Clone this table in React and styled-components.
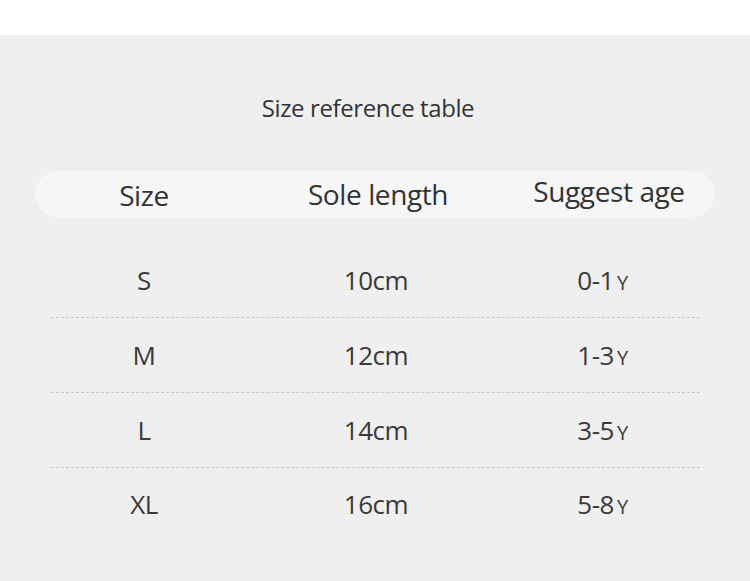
import React from "react";
import styled, { createGlobalStyle } from "styled-components";

const Global = createGlobalStyle`
  html, body { margin: 0; padding: 0; background: #ffffff; }
  body { font-family: "Open Sans", "Noto Sans", sans-serif; }
`;

const Page = styled.div`
  width: 750px;
  height: 581px;
  display: flex;
  flex-direction: column;
  overflow: hidden;
`;

const TopStrip = styled.div`
  height: 35px;
  background: #ffffff;
  flex: none;
`;

const Panel = styled.section`
  flex: 1;
  background: #efefef;
  display: flex;
  flex-direction: column;
  padding-top: 58px;
`;

const Title = styled.h1`
  margin: 0;
  padding-right: 14px;
  font-weight: 400;
  font-size: 24px;
  line-height: 30px;
  color: #333333;
  text-align: center;
  letter-spacing: -0.4px;
`;

const HeaderPill = styled.div`
  margin: 48px 35px 0 35px;
  height: 46px;
  border-radius: 23px;
  background: #f6f6f6;
  display: grid;
  grid-template-columns: 218px 250px 212px;
  align-items: center;
`;

const HeadCell = styled.div`
  text-align: center;
  font-size: 28px;
  color: #333333;
  line-height: 46px;
  letter-spacing: -0.4px;
  transform: translateY(${(p) => p.$dy || 0}px);
`;

const Body = styled.div`
  margin: 26px 50px 0 51px;
  display: flex;
  flex-direction: column;
`;

const Row = styled.div`
  height: ${(p) => (p.$last ? 72 : 75)}px;
  display: grid;
  grid-template-columns: 186px 278px 175px;
  align-items: center;
  border-bottom: ${(p) => (p.$last ? "none" : "1px dashed #c9c9c9")};
  box-sizing: border-box;
`;

const Cell = styled.div`
  text-align: center;
  font-size: 26px;
  color: #3a3a3a;
  letter-spacing: -0.5px;
`;

const Unit = styled.span`
  font-size: 20px;
  margin-left: 3px;
`;

const rows = [
  ["S", "10cm", "0-1"],
  ["M", "12cm", "1-3"],
  ["L", "14cm", "3-5"],
  ["XL", "16cm", "5-8"],
];

export default function App() {
  return (
    <Page>
      <Global />
      <TopStrip />
      <Panel>
        <Title>Size reference table</Title>
        <HeaderPill>
          <HeadCell $dy={1}>Size</HeadCell>
          <HeadCell $dy={0}>Sole length</HeadCell>
          <HeadCell $dy={-3}>Suggest age</HeadCell>
        </HeaderPill>
        <Body>
          {rows.map((r, i) => (
            <Row key={r[0]} $last={i === rows.length - 1}>
              <Cell>{r[0]}</Cell>
              <Cell>{r[1]}</Cell>
              <Cell>
                {r[2]}
                <Unit>Y</Unit>
              </Cell>
            </Row>
          ))}
        </Body>
      </Panel>
    </Page>
  );
}
